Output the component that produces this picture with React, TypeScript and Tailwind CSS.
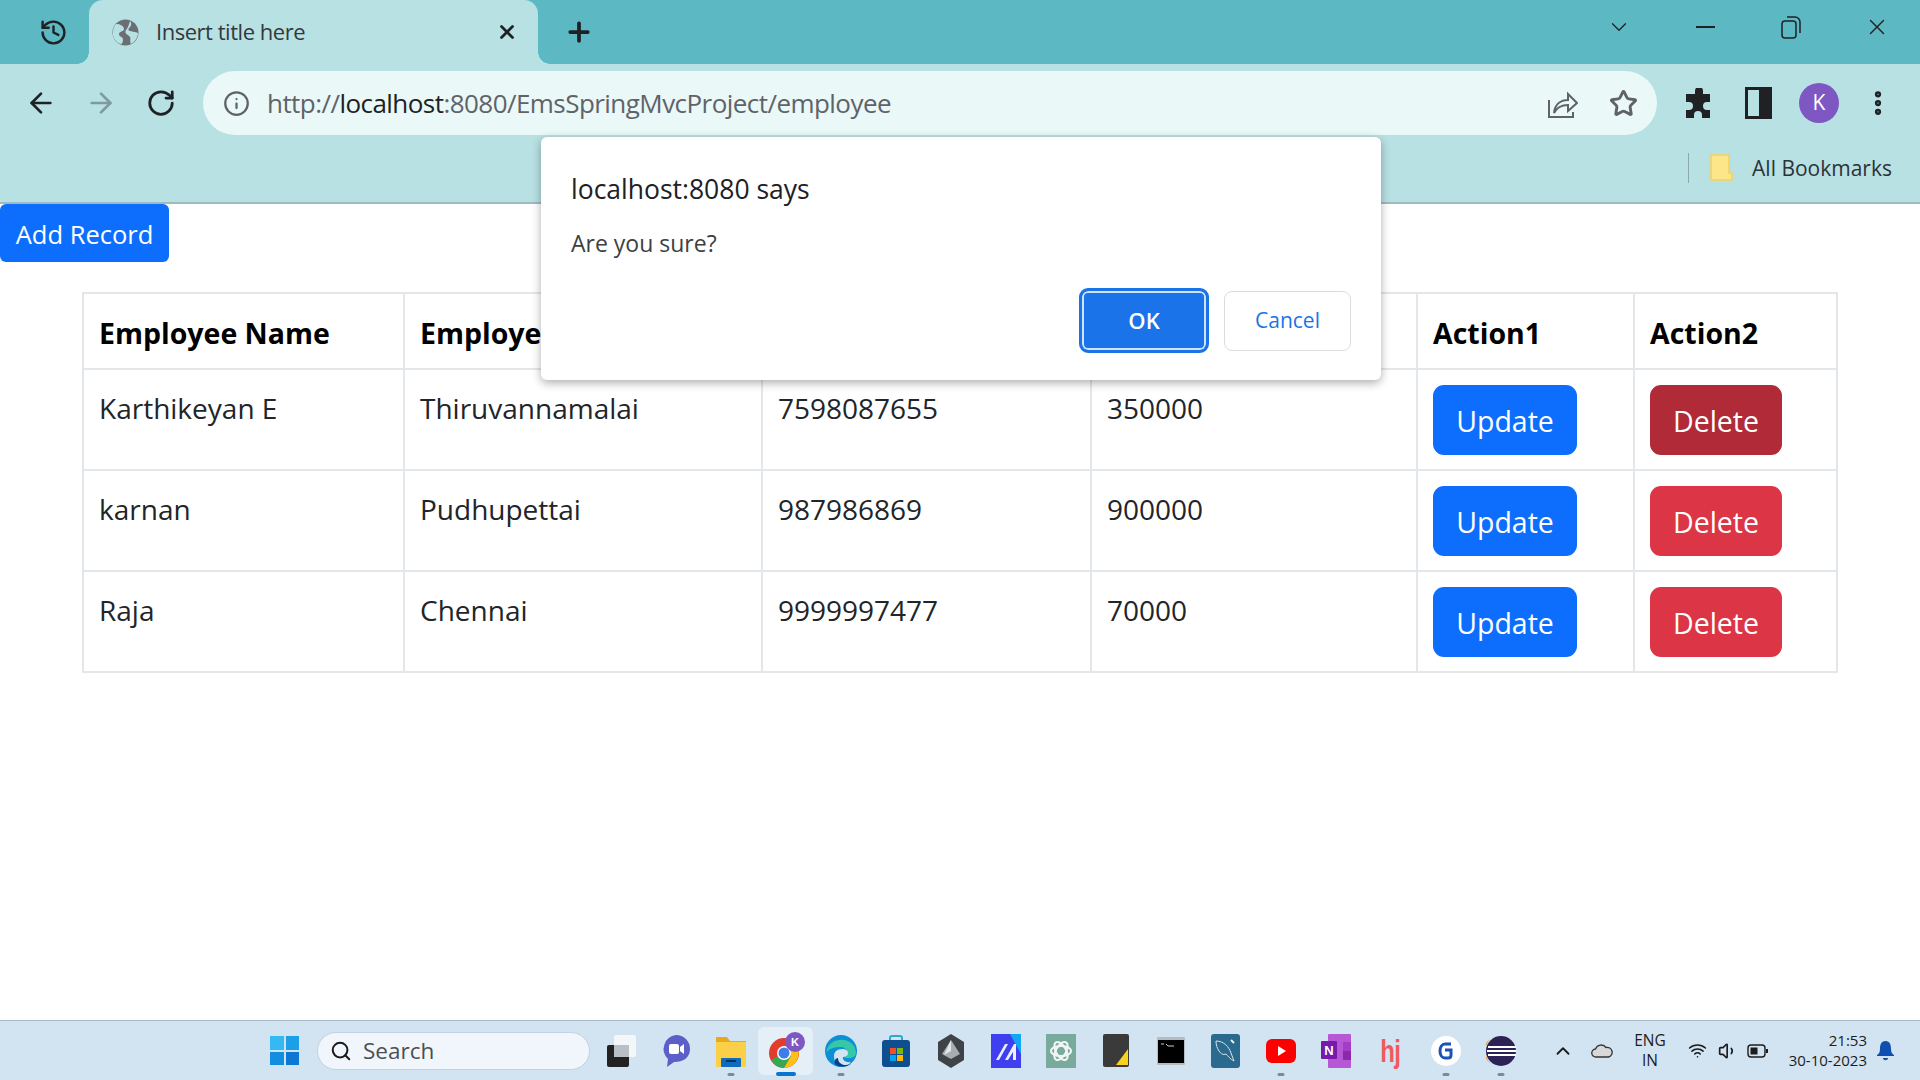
import React from 'react';
import { ArrowLeft, ArrowRight, ChevronDown, ChevronUp, EllipsisVertical, History, Info, Plus, RotateCw, Search, Star, Volume1, Wifi, X } from 'lucide-react';

const rows = [
  { name: 'Karthikeyan E', address: 'Thiruvannamalai', phone: '7598087655', salary: '350000', hover: true },
  { name: 'karnan', address: 'Pudhupettai', phone: '987986869', salary: '900000', hover: false },
  { name: 'Raja', address: 'Chennai', phone: '9999997477', salary: '70000', hover: false },
];

// the dialog covers the middle headers, only "Employe" shows from them
const headers = ['Employee Name', 'Employee', '', '', 'Action1', 'Action2'];

function TaskIcon({ children, running, active }: { children: React.ReactNode; running?: boolean; active?: boolean }) {
  return (
    <div className={`relative flex h-[48px] w-[55px] items-center justify-center rounded-md ${active ? 'bg-[#e4eff8]' : ''}`}>
      {children}
      {running && <span className="absolute bottom-[-1px] left-1/2 h-[3px] w-[7px] -translate-x-1/2 rounded-full bg-[#7d8a96]" />}
      {active && <span className="absolute bottom-[-1px] left-1/2 h-[4px] w-[20px] -translate-x-1/2 rounded-full bg-[#0a74d1]" />}
    </div>
  );
}

function TaskBar() {
  return (
    <footer className="flex h-[60px] shrink-0 items-center border-t border-[#a9b9c8] bg-[#d2e4f2]">
      <div className="ml-[270px] grid h-[29px] w-[29px] grid-cols-2 gap-[2px]">
        <span className="bg-[#35b9f3]" />
        <span className="bg-[#1d9fe8]" />
        <span className="bg-[#118ee0]" />
        <span className="bg-[#0b78d4]" />
      </div>
      <div className="ml-[18px] mr-[3px] flex h-[38px] w-[273px] items-center rounded-full border border-[#c3d2de] bg-[#f0f6fb] pl-[12px]">
        <Search size={22} strokeWidth={2.2} className="text-[#1b1b1b]" />
        <span className="ml-[11px] text-[22.5px] text-[#4b4f54]">Search</span>
      </div>
      <div className="flex items-center">
        <TaskIcon>
          <svg width="30" height="34" viewBox="0 0 30 34">
            <rect x="1" y="11" width="22" height="22" rx="2" fill="#222" />
            <rect x="8" y="1" width="22" height="22" rx="2" fill="#f6f8fa" opacity="0.9" />
            <rect x="8" y="11" width="15" height="12" fill="#b9bfc4" />
          </svg>
        </TaskIcon>
        <TaskIcon>
          <svg width="30" height="34" viewBox="0 0 30 34">
            <path d="M15 1a14 14 0 0 1 14 14c0 9-7 13-16 13l-7 5 1-8A14 14 0 0 1 15 1z" fill="#5b5fc7" />
            <rect x="8" y="10" width="10" height="10" rx="2" fill="#fff" />
            <path d="M19 13l4-3v10l-4-3z" fill="#fff" />
          </svg>
        </TaskIcon>
        <TaskIcon running>
          <svg width="32" height="34" viewBox="0 0 32 34">
            <path d="M1 3h11l3 4h16v26H1z" fill="#e9a91f" />
            <rect x="1" y="8" width="30" height="25" fill="#fbcf48" />
            <rect x="6" y="24" width="20" height="9" rx="1" fill="#0f6cbd" />
            <rect x="11" y="26" width="10" height="2" fill="#08345c" />
          </svg>
        </TaskIcon>
        <TaskIcon running={false} active>
          <svg className="ml-[3px]" width="36" height="38" viewBox="0 0 36 38">
            <circle cx="15" cy="21" r="15" fill="#e33b2e" />
            <path d="M2 28a15 15 0 0 0 13 8l7-12-11-1z" fill="#34a853" />
            <path d="M15 36a15 15 0 0 0 13-22H15l7 10z" fill="#fbc116" />
            <circle cx="15" cy="21" r="7" fill="#fff" />
            <circle cx="15" cy="21" r="5.5" fill="#3f7ee8" />
            <circle cx="26" cy="10" r="10" fill="#7e57c2" />
            <text x="26" y="14" textAnchor="middle" fontSize="11" fill="#fff" fontFamily="Liberation Sans" fontWeight="700">K</text>
          </svg>
        </TaskIcon>
        <TaskIcon running>
          <svg width="32" height="34" viewBox="0 0 32 34">
            <circle cx="16" cy="17" r="16" fill="#0c8fd4" />
            <path d="M1 19C3 8 12 5 19 6c7 1 12 6 12 13 0 3-3 5-7 5h-5c2-2 3-3 3-6 0-3-3-5-7-5-6 0-12 2-14 6z" fill="#36c7a6" />
            <path d="M9 22c0-4 3-7 8-7 4 0 6 2 6 4 0 3-3 4-5 4-1 3 3 6 8 5-3 4-8 5-11 4-4-1-6-6-6-10z" fill="#d2e4f2" />
            <path d="M13 24c0 5 5 9 13 6-4 3-12 4-16 0-1-2 0-6 3-6z" fill="#0b3e8a" />
          </svg>
        </TaskIcon>
        <TaskIcon>
          <svg width="28" height="33" viewBox="0 0 28 33">
            <path d="M8 7V4a2 2 0 0 1 2-2h8a2 2 0 0 1 2 2v3" fill="none" stroke="#2ea6d8" strokeWidth="2" />
            <rect x="0" y="6" width="28" height="27" rx="3" fill="#104f8f" />
            <rect x="8" y="14" width="6" height="6" fill="#f25022" />
            <rect x="15" y="14" width="6" height="6" fill="#7fba00" />
            <rect x="8" y="21" width="6" height="6" fill="#00a4ef" />
            <rect x="15" y="21" width="6" height="6" fill="#ffb900" />
          </svg>
        </TaskIcon>
        <TaskIcon>
          <svg width="28" height="34" viewBox="0 0 28 34">
            <path d="M14 0l13 8v18l-13 8-13-8V8z" fill="#3f4347" />
            <path d="M14 6l9 14-9 5-9-5z" fill="#a8adb2" />
            <path d="M14 6v11l-7 4z" fill="#e4e7ea" />
          </svg>
        </TaskIcon>
        <TaskIcon>
          <svg width="30" height="34" viewBox="0 0 30 34">
            <rect width="30" height="34" fill="#3f3ff0" />
            <path d="M19 0h11v20z" fill="#12a6f5" />
            <path d="M5 26L14 10h3L8 26zM14 26l9-16h2v16h-3v-8l-5 8z" fill="#eaf0ff" />
          </svg>
        </TaskIcon>
        <TaskIcon>
          <svg width="30" height="34" viewBox="0 0 30 34">
            <rect width="30" height="34" fill="#79ab9c" />
            <g fill="none" stroke="#f2f7f5" strokeWidth="2">
              <ellipse cx="15" cy="17" rx="10" ry="5" />
              <ellipse cx="15" cy="17" rx="10" ry="5" transform="rotate(60 15 17)" />
              <ellipse cx="15" cy="17" rx="10" ry="5" transform="rotate(120 15 17)" />
            </g>
          </svg>
        </TaskIcon>
        <TaskIcon>
          <svg width="26" height="33" viewBox="0 0 26 33">
            <rect width="26" height="33" rx="2" fill="#3a3a3a" />
            <path d="M13 31L25 15v16z" fill="#f6d31f" />
          </svg>
        </TaskIcon>
        <TaskIcon>
          <svg width="28" height="28" viewBox="0 0 28 28">
            <rect width="28" height="28" rx="1" fill="#b4bcc2" />
            <rect x="1" y="3" width="26" height="23" fill="#000" />
            <path d="M4 7h3M9 7l2 2h6" stroke="#ccc" strokeWidth="1" fill="none" />
          </svg>
        </TaskIcon>
        <TaskIcon>
          <svg width="29" height="34" viewBox="0 0 29 34">
            <rect width="29" height="34" rx="3" fill="#2a6a8e" />
            <path d="M5 7c8 0 13 6 15 12l3 8c-4-2-6-5-8-7-3 1-5 0-7-3-2-3-3-6-3-10z" fill="none" stroke="#d5e4ec" strokeWidth="1" />
            <path d="M20 6l3 3" stroke="#e6eff4" strokeWidth="2" />
          </svg>
        </TaskIcon>
        <TaskIcon running>
          <svg width="30" height="24" viewBox="0 0 30 24">
            <rect width="30" height="24" rx="6" fill="#f00" />
            <path d="M12 7l8 5-8 5z" fill="#fff" />
          </svg>
        </TaskIcon>
        <TaskIcon>
          <svg width="30" height="34" viewBox="0 0 30 34">
            <rect x="7" y="0" width="23" height="34" rx="1" fill="#b658d6" />
            <rect x="22" y="8" width="8" height="9" fill="#a33cc7" />
            <rect x="22" y="17" width="8" height="9" fill="#8a2aa8" />
            <rect x="0" y="7" width="16" height="18" rx="1" fill="#7719aa" />
            <text x="8" y="21" textAnchor="middle" fontSize="13" fontWeight="700" fill="#fff" fontFamily="Liberation Sans">N</text>
          </svg>
        </TaskIcon>
        <TaskIcon>
          <span className="scale-x-75 text-[32px] leading-none font-bold tracking-[-1px] text-[#f2595d] font-['Liberation_Sans',sans-serif]">hj</span>
        </TaskIcon>
        <TaskIcon running>
          <svg width="30" height="30" viewBox="0 0 30 30">
            <circle cx="15" cy="15" r="15" fill="#fff" />
            <path d="M20 8h-6c-3 0-5 3-5 7s2 7 5 7h3c2 0 3-1 3-3v-5h-6" fill="none" stroke="#1a52b8" strokeWidth="3" />
          </svg>
        </TaskIcon>
        <TaskIcon running>
          <svg width="30" height="30" viewBox="0 0 30 30">
            <circle cx="15" cy="15" r="15" fill="#2c2255" />
            <path d="M4 3A15 15 0 0 0 4 27 18 18 0 0 1 4 3z" fill="#f7941e" />
            <rect x="2" y="10" width="28" height="2" fill="#fff" />
            <rect x="1" y="14" width="29" height="2" fill="#fff" />
            <rect x="2" y="18" width="28" height="2" fill="#fff" />
          </svg>
        </TaskIcon>
      </div>
      <div className="ml-[24px] flex items-center text-[#1c1c1c]">
        <ChevronUp size={22} strokeWidth={2} />
        <svg className="ml-[17px]" width="22" height="15" viewBox="0 0 22 15">
          <path d="M5 14a4 4 0 0 1-.5-8A6 6 0 0 1 15 4.500a4.500 4.500 0 0 1 2.500 9.500z" fill="#d8d8d8" stroke="#333" strokeWidth="1.300" />
        </svg>
        <div className="ml-[21px] -mt-[2px] flex w-[32px] flex-col items-center text-[15.5px] leading-[20px]">
          <span>ENG</span>
          <span>IN</span>
        </div>
        <Wifi size={19} className="ml-[22px]" />
        <Volume1 size={20} className="ml-[11px]" />
        <svg className="ml-[9px]" width="21" height="14" viewBox="0 0 21 14">
          <rect x="1" y="1" width="17" height="12" rx="3" fill="none" stroke="#1c1c1c" strokeWidth="1.400" />
          <rect x="3.500" y="3.500" width="7" height="7" fill="#1c1c1c" />
          <rect x="19" y="5" width="2" height="4" fill="#1c1c1c" />
        </svg>
        <div className="ml-[20px] -mt-[2px] flex w-[79px] flex-col items-end text-[15px] leading-[20px]">
          <span>21:53</span>
          <span className="whitespace-nowrap">30-10-2023</span>
        </div>
        <svg className="ml-[10px]" width="17" height="20" viewBox="0 0 17 20">
          <path d="M8.500 0C4 0 3 4 3 8c0 3-1 5-3 6v1h17v-1c-2-1-3-3-3-6 0-4-1-8-5.500-8zM6 17h5c0 3-5 3-5 0z" fill="#0f4fb0" />
        </svg>
      </div>
    </footer>
  );
}

function BrowserChrome() {
  return (
    <header className="shrink-0 bg-[#b8e1e4]">
      <div className="flex h-[64px] items-start bg-[#5cb8c2] text-[#1f2124]">
        <div className="flex h-[64px] w-[89px] items-center justify-center pl-[17px]">
          <History size={29} strokeWidth={2} />
        </div>
        <div className="relative flex h-[64px] w-[449px] items-center rounded-t-[14px] bg-[#b8e1e4] pl-[23px] pr-[20px]">
          <span className="absolute bottom-0 left-[-12px] h-[12px] w-[12px] bg-[radial-gradient(circle_at_0_0,#5cb8c2_11.500px,#b8e1e4_12px)]" />
          <span className="absolute bottom-0 right-[-12px] h-[12px] w-[12px] bg-[radial-gradient(circle_at_100%_0,#5cb8c2_11.500px,#b8e1e4_12px)]" />
          <svg width="27" height="27" viewBox="0 0 27 27">
            <circle cx="13.500" cy="13.500" r="13" fill="#6b6e73" />
            <path d="M4 5c4 0 8 2 8 5s-5 2-5 5 4 2 4 6c0 2-1 4-2 4-5-1-9-7-8-12 0-3 1-6 3-8zM18 2c2 2 1 5 0 6s-3 3 0 4 7 1 8 2c0 4-3 9-7 11-2-3 1-6-2-8-2-2-5-3-3-6 2-2 3-6 4-9z" fill="#b8e1e4" />
          </svg>
          <span className="ml-[17px] -mt-[1px] flex-1 text-[22px] tracking-[-0.47px] text-[#34383c]">Insert title here</span>
          <X size={22} strokeWidth={3} className="text-[#202124]" />
        </div>
        <Plus size={30} strokeWidth={3} className="ml-[26px] mt-[17px]" />
        <div className="ml-auto flex h-[54px] items-center">
          <ChevronDown size={26} strokeWidth={1.200} className="mr-[64px]" />
          <span className="mr-[66px] h-[1.500px] w-[19px] bg-[#1f2124]" />
          <svg className="mr-[63px]" width="20" height="24" viewBox="0 0 20 24" fill="none" stroke="#1f2124" strokeWidth="1.500">
            <rect x="1" y="6" width="14" height="17" rx="3" />
            <path d="M6 2h8a5 5 0 0 1 5 5v11" />
          </svg>
          <X size={26} strokeWidth={1.300} className="mr-[30px]" />
        </div>
      </div>
      <div className="flex h-[71px] items-center pt-[7px]">
        <div className="flex w-[203px] items-center text-[#202124]">
          <ArrowLeft size={32} strokeWidth={2} className="ml-[25px]" />
          <ArrowRight size={32} strokeWidth={2} className="ml-[28px] text-[#7f9a9e]" />
          <RotateCw size={30} strokeWidth={2.200} className="ml-[29px]" />
        </div>
        <div className="flex h-[64px] w-[1454px] items-center rounded-full bg-[#eaf8f8] pl-[20px]">
          <Info size={27} strokeWidth={2} className="text-[#5f6368]" />
          <span className="ml-[17px] text-[26px] tracking-[-0.55px] text-[#5f6368]">
            http://<span className="text-[#202124]">localhost</span>:8080/EmsSpringMvcProject/employee
          </span>
          <svg className="ml-auto" width="30" height="30" viewBox="0 0 30 30" fill="none" stroke="#5f6368" strokeWidth="2">
            <path d="M1 12v17h24v-5" />
            <path d="M6 25c1-9 7-13 14-13V6l9 9-9 8v-6c-6 0-11 2-14 8z" />
          </svg>
          <Star size={29} strokeWidth={2.400} className="ml-[31px] mr-[19px] text-[#5f6368]" />
        </div>
        <svg className="ml-[28px]" width="27" height="30" viewBox="0 0 27 30">
          <path d="M10 3a4 4 0 0 1 8 0v3h7v8h-3a4 4 0 0 0 0 8h3v8H17v-3a4 4 0 0 0-8 0v3H1v-8h3a4 4 0 0 0 0-8H1V6h9z" fill="#202124" />
        </svg>
        <div className="ml-[33px] flex h-[32px] w-[27px] justify-end border-[3px] border-r-[13px] border-[#202124]" />
        <div className="ml-[27px] flex h-[40px] w-[40px] items-center justify-center rounded-full bg-[#7e57c2] text-[21px] text-white">K</div>
        <EllipsisVertical size={30} strokeWidth={3} className="ml-[24px] text-[#202124]" />
      </div>
      <div className="flex h-[69px] items-center justify-end border-b-[2px] border-[#9cbcc0] pb-[2px]">
        <span className="h-[30px] w-px bg-[#8fa8ac]" />
        <svg className="ml-[21px]" width="23" height="27" viewBox="0 0 23 27">
          <path d="M1 1h18v18h3v7H1z" fill="#fde58a" stroke="#f2d25e" strokeWidth="1.500" />
        </svg>
        <span className="ml-[19px] mr-[28px] mt-[2px] text-[21px] text-[#2d3236]">All Bookmarks</span>
      </div>
    </header>
  );
}

function EmployeeTable() {
  const cell = 'border-2 border-[#e4e7ea] px-[15px] pt-[17px] pb-[14px] align-top text-[#212529]';
  const actionCell = 'border-2 border-[#e4e7ea] px-[15px] pt-[15px] pb-[14px] align-top';

  return (
    <table className="ml-[82px] mt-[30px] w-[1754px] table-fixed border-collapse">
      <colgroup>
        <col className="w-[321px]" />
        <col className="w-[358px]" />
        <col className="w-[329px]" />
        <col className="w-[326px]" />
        <col className="w-[217px]" />
        <col className="w-[203px]" />
      </colgroup>
      <thead>
        <tr className="h-[76px]">
          {headers.map((h, i) => (
            <th key={i} className="whitespace-nowrap border-2 border-[#e4e7ea] px-[15px] pt-[4px] text-left text-[28.5px] font-bold text-black">
              {h}
            </th>
          ))}
        </tr>
      </thead>
      <tbody>
        {rows.map((r) => (
          <tr key={r.name} className="h-[101px]">
            <td className={cell}>{r.name}</td>
            <td className={cell}>{r.address}</td>
            <td className={cell}>{r.phone}</td>
            <td className={cell}>{r.salary}</td>
            <td className={actionCell}>
              <button className="block h-[70px] w-[144px] rounded-[11px] bg-[#0d6efd] pt-[2px] text-[28.5px] text-white">Update</button>
            </td>
            <td className={actionCell}>
              <button className={`block h-[70px] w-[132px] rounded-[11px] pt-[2px] text-[28.5px] text-white ${r.hover ? 'bg-[#b02a37]' : 'bg-[#dc3545]'}`}>Delete</button>
            </td>
          </tr>
        ))}
      </tbody>
    </table>
  );
}

function ConfirmDialog() {
  return (
    <div className="absolute left-[541px] top-[137px] flex h-[243px] w-[840px] flex-col rounded-[6px] bg-white pl-[30px] pr-[29px] pt-[30px] shadow-[0_3px_10px_rgba(0,0,0,0.32)]">
      <h2 className="text-[26.5px] leading-[44px] text-[#202124]">localhost:8080 says</h2>
      <p className="mt-[10px] text-[23px] leading-[44px] text-[#3c4043]">Are you sure?</p>
      <div className="mt-[23px] mr-[1px] flex items-center justify-end gap-[15px]">
        <button className="h-[65px] w-[130px] rounded-[9px] border-[3px] border-[#1a73e8] bg-[#1a73e8] text-[22px] font-semibold text-white shadow-[inset_0_0_0_2px_#cfe2fb]">OK</button>
        <button className="h-[60px] w-[127px] rounded-[8px] border border-[#dadce0] bg-white text-[21px] font-medium text-[#1a73e8]">Cancel</button>
      </div>
    </div>
  );
}

export default function App() {
  return (
    <div className="relative flex h-screen w-full flex-col overflow-hidden bg-white font-['Open_Sans','Noto_Sans',sans-serif] text-[28px]">
      <BrowserChrome />
      <main className="flex-1">
        <button className="block h-[58px] w-[169px] rounded-[6px] bg-[#0d6efd] pt-[2px] text-[25.5px] text-white">Add Record</button>
        <EmployeeTable />
      </main>
      <TaskBar />
      <ConfirmDialog />
    </div>
  );
}
